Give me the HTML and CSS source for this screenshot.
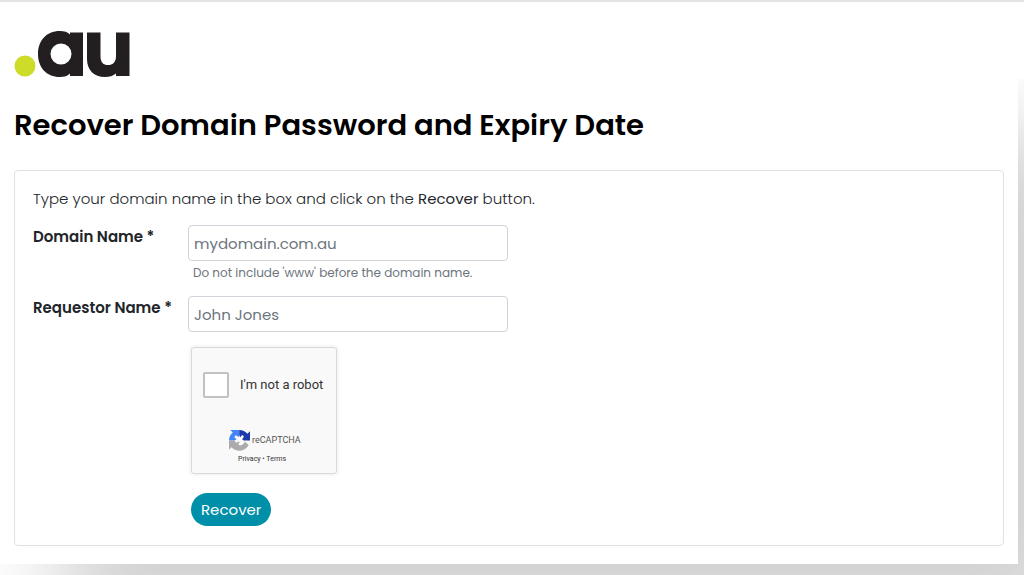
FILE: index.html
```html
<!DOCTYPE html>
<html lang="en">
<head>
  <meta charset="UTF-8" />
  <meta name="viewport" content="width=device-width, initial-scale=1.0"/>
  <title>Recover Domain Password and Expiry Date</title>
  <link rel="stylesheet" href="styles.css">
</head>
<body>
  <header>
    <svg class="logo" viewBox="0 0 117 48" role="img" aria-label=".au">
      <circle cx="11" cy="35" r="10.500" fill="#cddc29"/>
      <path fill="#231f20" fill-rule="evenodd" d="M46 0C32 0 24 10 24 23s8 23 22 23c4 0 8-1 10-3.500V45h13V1.500H56v2C54 1 50 0 46 0zM47 12.500a10.500 10.500 0 1 1 0 21 10.500 10.500 0 0 1 0-21z"/>
      <path fill="#231f20" d="M73 1.500h13.500v24c0 6 3 8.500 7.500 8.500s8-2.500 8-8.500v-24h13.500V45H102v-2.500C99 45 95.500 46 91 46c-11 0-18-7-18-18z"/>
    </svg>
  </header>

  <main>
    <h1>Recover Domain Password and Expiry Date</h1>

    <form class="card">
      <p class="intro">Type your domain name in the box and click on the <b>Recover</b> button.</p>

      <div class="row">
        <label for="domain">Domain Name *</label>
        <div class="field">
          <input type="text" id="domain" placeholder="mydomain.com.au" aria-describedby="domainHelp" />
          <small id="domainHelp">Do not include 'www' before the domain name.</small>
        </div>
      </div>

      <div class="row">
        <label for="requestor">Requestor Name *</label>
        <div class="field">
          <input type="text" id="requestor" placeholder="John Jones" />
        </div>
      </div>

      <div class="actions">
        <div class="captcha">
          <div class="check">
            <input type="checkbox" id="robot" />
            <label for="robot">I'm not a robot</label>
          </div>
          <div class="brand">
            <svg viewBox="0 0 64 64" aria-hidden="true">
              <path fill="#1c3aa9" d="M64 32V4l-7.800 7.800A32 32 0 0 0 31 0v16l4 6 4-6c3-1 6 1 6 5l-5 7 5 4z"/>
              <path fill="#4285f4" d="M31 0H4l7.500 7.500A32 32 0 0 0 0 32h17l6-4-6-5c0-4 2-6 6-6l8 5z"/>
              <path fill="#ababab" d="M0 32v28l7.700-7.700A32 32 0 0 0 60 46L48 35c-2 8-9 12-16 12l-4-5 5-4-4-3-7 4-6-7z"/>
            </svg>
            <span>reCAPTCHA</span>
          </div>
          <div class="terms"><a href="#">Privacy</a> • <a href="#">Terms</a></div>
        </div>
        <button type="submit">Recover</button>
      </div>
    </form>
  </main>
</body>
</html>
```
FILE: styles.css
```css
* {
  box-sizing: border-box;
}
body {
  font-family: Poppins, Inter, sans-serif;
  font-size: 15px;
  line-height: 24px;
  color: #212529;
  background-color: white;
  margin: 0;
  min-height: 100vh;
  overflow-x: hidden;
  border-top: 2px solid #e4e4e4;
}
header {
  position: relative;
  padding: 29px 14px 0;
  height: 77px;
  margin-bottom: -11px;
  background-color: white;
}
.logo {
  display: block;
  width: 117px;
  height: 48px;
}
main {
  margin-right: 6px;
  padding: 37px 14px 18px;
  background-color: white;
  box-shadow: 60px 65px 90px #d0d0d0;
}
h1 {
  margin: 0 0 25px;
  font-size: 29px;
  line-height: 40px;
  font-weight: 600;
  color: black;
}
.card {
  padding: 16px 18px 19px;
  border: 1px solid #e2e2e2;
  border-radius: 4px;
}
.intro {
  margin: 0 0 14px;
  font-weight: 300;
}
.intro b {
  font-weight: 400;
}
.row {
  display: grid;
  grid-template-columns: 155px minmax(0, 320px);
  margin-bottom: 15px;
}
.row > label {
  font-weight: 600;
}
.field input {
  display: block;
  width: 100%;
  height: 36px;
  padding: 0 5px;
  font: inherit;
  border: 1px solid #ced4da;
  border-radius: 4px;
}
.field input::placeholder {
  color: #6c757d;
  opacity: 1;
}
small {
  display: block;
  margin: 4px 5px 0;
  font-size: 12px;
  line-height: 16px;
  color: #6c757d;
}
.actions {
  margin-left: 158px;
}
.captcha {
  width: 146px;
  margin-bottom: 19px;
  padding: 24px 0 5px;
  font-family: Roboto, sans-serif;
  color: #333;
  background-color: #f9f9f9;
  border: 1px solid #d9d9d9;
  border-radius: 3px;
  box-shadow: 0 0 4px rgba(0,0,0,0.1);
}
.check {
  display: flex;
  align-items: center;
  gap: 11px;
  padding-left: 11px;
  font-size: 13px;
}
.check input {
  appearance: none;
  width: 26px;
  height: 26px;
  margin: 0;
  background-color: white;
  border: 2px solid #c1c1c1;
  border-radius: 2px;
}
.brand {
  display: flex;
  align-items: center;
  gap: 2px;
  margin-top: 31px;
  padding-left: 37px;
  font-size: 9px;
  line-height: 22px;
  color: #555;
}
.brand svg {
  width: 21px;
  height: 21px;
}
.terms {
  padding-left: 46px;
  font-size: 7px;
  line-height: 17px;
}
.terms a {
  color: #333;
  text-decoration: none;
}
button {
  height: 33px;
  padding: 0 10px;
  font: inherit;
  color: white;
  background-color: #008fa9;
  border: 0;
  border-radius: 17px;
}
```
